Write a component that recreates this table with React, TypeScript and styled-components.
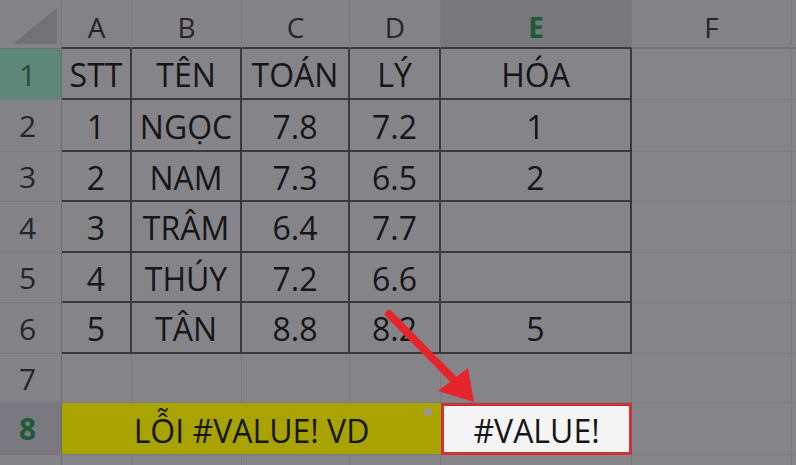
import React from "react";
import styled, { createGlobalStyle, css } from "styled-components";

const Global = createGlobalStyle`
  html, body { margin: 0; padding: 0; background: #858489; overflow: hidden; }
  #root { width: 796px; height: 465px; }
`;

const Page = styled.div`
  position: relative;
  width: 796px;
  height: 465px;
  overflow: hidden;
  background: #858489;
  font-family: "Open Sans", "Noto Sans", sans-serif;
  color: #161617;
`;

const Sheet = styled.div`
  display: grid;
  grid-template-columns: 62px 70px 110px 108px 91px 191px 160px 40px;
  grid-template-rows: 49px 51px 52px 50px 51px 50px 51px 49px 52px 20px;
`;

const Corner = styled.div`
  position: relative;
  background: #838287;
  border-right: 1px solid #77767b;
  border-bottom: 1px solid #6f6e73;
  &::after {
    content: "";
    position: absolute;
    right: 4px;
    bottom: 4px;
    width: 0;
    height: 0;
    border-left: 44px solid transparent;
    border-bottom: 36px solid #727176;
  }
`;

const ColHeader = styled.div<{ $active?: boolean; $inTable?: boolean }>`
  display: flex;
  align-items: center;
  justify-content: center;
  padding-top: 6px;
  box-sizing: border-box;
  font-size: 28px;
  color: #262628;
  background: #838287;
  border-right: 1px solid #7a797e;
  border-bottom: ${(p) => (p.$inTable ? "2px solid #3a3a3c" : "2px solid #737277")};
  ${(p) =>
    p.$active &&
    css`
      background: #78777c;
      color: #1d5b3b;
      font-weight: 700;
    `}
`;

const RowHeader = styled.div<{ $variant?: "teal" | "active" }>`
  display: flex;
  align-items: center;
  justify-content: center;
  padding-right: 6px;
  box-sizing: border-box;
  font-size: 30px;
  color: #262628;
  background: #838287;
  border-right: 1px solid #6c6b70;
  border-bottom: 1px solid #7a797e;
  ${(p) =>
    p.$variant === "teal" &&
    css`
      background: #5d8778;
      color: #284a3d;
    `}
  ${(p) =>
    p.$variant === "active" &&
    css`
      background: #7a797f;
      color: #1d5b3b;
      font-weight: 700;
    `}
`;

const Cell = styled.div<{ $table?: boolean }>`
  display: flex;
  align-items: center;
  justify-content: center;
  box-sizing: border-box;
  font-size: 32px;
  padding-top: 2px;
  background: #858489;
  white-space: nowrap;
  border-right: 1px solid #7b7a7f;
  border-bottom: 1px solid #7b7a7f;
  ${(p) =>
    p.$table &&
    css`
      border-right: 2px solid #3a3a3c;
      border-bottom: 2px solid #3a3a3c;
    `}
`;

const MergedCell = styled.div`
  position: relative;
  grid-column: 2 / span 4;
  display: flex;
  align-items: center;
  justify-content: center;
  box-sizing: border-box;
  font-size: 32px;
  background: #a8a300;
  border-bottom: 1px solid #7b7a7f;
  padding-top: 3px;
`;

const Indicator = styled.div`
  position: absolute;
  top: 5px;
  right: 9px;
  width: 8px;
  height: 8px;
  background: #9c9a7e;
  border-radius: 1px;
`;

const ErrorCell = styled.div`
  display: flex;
  align-items: center;
  justify-content: center;
  box-sizing: border-box;
  font-size: 32px;
  background: #f4f4f4;
  border: 3px solid #cf3139;
  padding-top: 3px;
`;

const ArrowLayer = styled.svg`
  position: absolute;
  left: 0;
  top: 0;
  pointer-events: none;
`;

const cols = ["A", "B", "C", "D", "E", "F"];

const data: string[][] = [
  ["STT", "TÊN", "TOÁN", "LÝ", "HÓA"],
  ["1", "NGỌC", "7.8", "7.2", "1"],
  ["2", "NAM", "7.3", "6.5", "2"],
  ["3", "TRÂM", "6.4", "7.7", ""],
  ["4", "THÚY", "7.2", "6.6", ""],
  ["5", "TÂN", "8.8", "8.2", "5"],
];

export default function App() {
  return (
    <Page>
      <Global />
      <Sheet>
        <Corner />
        {cols.map((c) => (
          <ColHeader key={c} $active={c === "E"} $inTable={c !== "F"}>
            {c}
          </ColHeader>
        ))}
        <ColHeader />

        {data.map((row, r) => (
          <React.Fragment key={r}>
            <RowHeader $variant={r === 0 ? "teal" : undefined}>{r + 1}</RowHeader>
            {row.map((v, c) => (
              <Cell key={c} $table>
                {v}
              </Cell>
            ))}
            <Cell />
            <Cell />
          </React.Fragment>
        ))}

        <RowHeader>7</RowHeader>
        <Cell />
        <Cell />
        <Cell />
        <Cell />
        <Cell />
        <Cell />
        <Cell />

        <RowHeader $variant="active">8</RowHeader>
        <MergedCell>
          LỖI #VALUE! VD
          <Indicator />
        </MergedCell>
        <ErrorCell>#VALUE!</ErrorCell>
        <Cell />
        <Cell />

        <RowHeader />
        <Cell />
        <Cell />
        <Cell />
        <Cell />
        <Cell />
        <Cell />
        <Cell />
      </Sheet>

      <ArrowLayer width="796" height="465" viewBox="0 0 796 465">
        <line x1="389" y1="314" x2="452" y2="378" stroke="#e6252b" strokeWidth="8" strokeLinecap="round" />
        <polygon points="474,402 438,391 468,368" fill="#e6252b" />
      </ArrowLayer>
    </Page>
  );
}
